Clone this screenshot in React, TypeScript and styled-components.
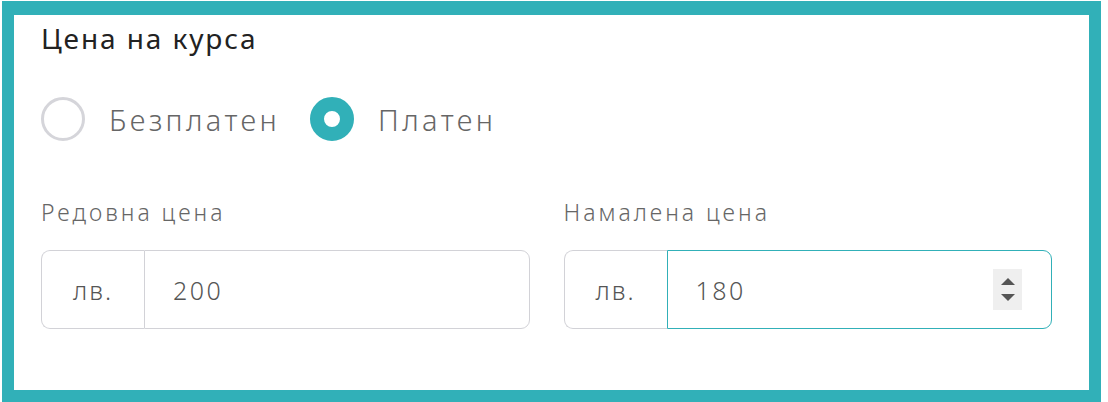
import React, { useState } from "react";
import styled, { createGlobalStyle } from "styled-components";

const GlobalStyle = createGlobalStyle`
  html, body {
    margin: 0;
    padding: 0;
    background: #ffffff;
  }
  body {
    font-family: "Noto Sans", "Open Sans", sans-serif;
  }
`;

const Page = styled.div`
  padding: 1px 7px 0 2px;
`;

const Frame = styled.section`
  box-sizing: border-box;
  height: 401px;
  border: 12px solid #31b0b8;
  border-top-width: 14px;
  padding: 4px 37px 0 27px;
  background: #fff;
`;

const Title = styled.h2`
  margin: 0;
  font-size: 28px;
  font-weight: 400;
  letter-spacing: 1.9px;
  line-height: 38px;
  color: #222;
`;

const RadioRow = styled.div`
  display: flex;
  align-items: center;
  gap: 30px;
  margin-top: 40px;
`;

const RadioOption = styled.label`
  display: flex;
  align-items: center;
  gap: 24px;
  cursor: pointer;
  font-size: 29px;
  font-weight: 300;
  letter-spacing: 3.4px;
  color: #666;
`;

const RadioDot = styled.span<{ $checked: boolean }>`
  box-sizing: border-box;
  width: 44px;
  height: 44px;
  border-radius: 50%;
  border: ${(p) => (p.$checked ? "14px solid #31b0b8" : "3px solid #d5d5da")};
  background: #fff;
`;

const HiddenInput = styled.input`
  display: none;
`;

const Fields = styled.div`
  display: grid;
  grid-template-columns: 1fr 1fr;
  column-gap: 34px;
  margin-top: 56px;
`;

const Field = styled.div`
  display: flex;
  flex-direction: column;
`;

const FieldLabel = styled.span`
  font-size: 23px;
  font-weight: 300;
  letter-spacing: 3px;
  color: #666;
  line-height: 30px;
`;

const InputGroup = styled.div`
  display: flex;
  margin-top: 23px;
  height: 79px;
`;

const Prefix = styled.span`
  box-sizing: border-box;
  width: 103px;
  flex: none;
  display: flex;
  align-items: center;
  justify-content: center;
  font-size: 25px;
  font-weight: 300;
  letter-spacing: 2px;
  color: #555;
  border: 1.5px solid #d2d2d7;
  border-right: none;
  border-radius: 9px 0 0 9px;
`;

const ValueBox = styled.div<{ $focused?: boolean }>`
  box-sizing: border-box;
  flex: 1;
  display: flex;
  align-items: center;
  border: 1.5px solid ${(p) => (p.$focused ? "#31b0b8" : "#d2d2d7")};
  border-radius: 0 9px 9px 0;
  padding: 0 29px 0 28px;
`;

const Value = styled.span`
  flex: 1;
  font-size: 25px;
  font-weight: 300;
  letter-spacing: 2.5px;
  color: #555;
`;

const Spinner = styled.div`
  width: 29px;
  height: 41px;
  background: #efefef;
  display: flex;
  flex-direction: column;
  align-items: center;
  justify-content: center;
  gap: 9px;
`;

const Arrow = styled.span<{ $down?: boolean }>`
  width: 0;
  height: 0;
  border-left: 7px solid transparent;
  border-right: 7px solid transparent;
  ${(p) =>
    p.$down ? "border-top: 7px solid #555;" : "border-bottom: 7px solid #555;"}
`;

export default function App() {
  const [paid, setPaid] = useState(true);

  return (
    <Page lang="bg">
      <GlobalStyle />
      <Frame>
        <Title>Цена на курса</Title>
        <RadioRow>
          <RadioOption onClick={() => setPaid(false)}>
            <HiddenInput type="radio" readOnly checked={!paid} />
            <RadioDot $checked={!paid} />
            Безплатен
          </RadioOption>
          <RadioOption onClick={() => setPaid(true)}>
            <HiddenInput type="radio" readOnly checked={paid} />
            <RadioDot $checked={paid} />
            Платен
          </RadioOption>
        </RadioRow>
        <Fields>
          <Field>
            <FieldLabel>Редовна цена</FieldLabel>
            <InputGroup>
              <Prefix>лв.</Prefix>
              <ValueBox>
                <Value>200</Value>
              </ValueBox>
            </InputGroup>
          </Field>
          <Field>
            <FieldLabel>Намалена цена</FieldLabel>
            <InputGroup>
              <Prefix>лв.</Prefix>
              <ValueBox $focused>
                <Value>180</Value>
                <Spinner>
                  <Arrow />
                  <Arrow $down />
                </Spinner>
              </ValueBox>
            </InputGroup>
          </Field>
        </Fields>
      </Frame>
    </Page>
  );
}
